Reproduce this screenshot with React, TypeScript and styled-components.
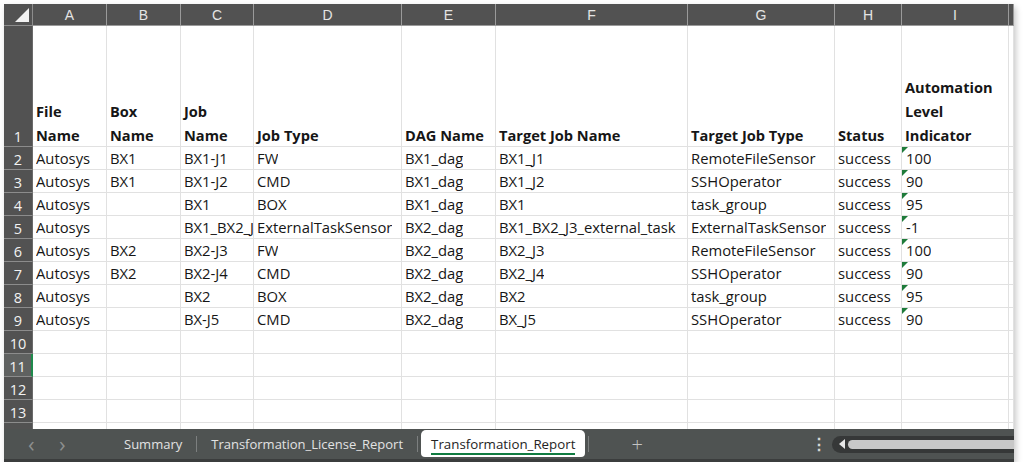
import React from "react";
import styled, { createGlobalStyle } from "styled-components";

const GlobalStyle = createGlobalStyle`
  html, body {
    margin: 0;
    padding: 0;
    background: #ffffff;
  }
`;

const COLS = ["A", "B", "C", "D", "E", "F", "G", "H", "I"];

const HEADERS = [
  "File\nName",
  "Box\nName",
  "Job\nName",
  "Job Type",
  "DAG Name",
  "Target Job Name",
  "Target Job Type",
  "Status",
  "Automation\nLevel\nIndicator",
];

const ROWS = [
  ["Autosys", "BX1", "BX1-J1", "FW", "BX1_dag", "BX1_J1", "RemoteFileSensor", "success", "100"],
  ["Autosys", "BX1", "BX1-J2", "CMD", "BX1_dag", "BX1_J2", "SSHOperator", "success", "90"],
  ["Autosys", "", "BX1", "BOX", "BX1_dag", "BX1", "task_group", "success", "95"],
  ["Autosys", "", "BX1_BX2_J3_external_task", "ExternalTaskSensor", "BX2_dag", "BX1_BX2_J3_external_task", "ExternalTaskSensor", "success", "-1"],
  ["Autosys", "BX2", "BX2-J3", "FW", "BX2_dag", "BX2_J3", "RemoteFileSensor", "success", "100"],
  ["Autosys", "BX2", "BX2-J4", "CMD", "BX2_dag", "BX2_J4", "SSHOperator", "success", "90"],
  ["Autosys", "", "BX2", "BOX", "BX2_dag", "BX2", "task_group", "success", "95"],
  ["Autosys", "", "BX-J5", "CMD", "BX2_dag", "BX_J5", "SSHOperator", "success", "90"],
];

const EMPTY_ROWS = [10, 11, 12, 13, 14];

function App() {
  return (
    <>
      <GlobalStyle />
      <Frame>
        <Sheet>
          <Corner>
            <svg width="14" height="14" viewBox="0 0 14 14">
              <polygon points="14,0 14,14 0,14" fill="#f2f2f2" />
            </svg>
          </Corner>
          {COLS.map((c) => (
            <ColHead key={c}>{c}</ColHead>
          ))}
          <ColHead />

          <RowHead>1</RowHead>
          {HEADERS.map((h, i) => (
            <HeadCell key={i}>
              <span>{h}</span>
            </HeadCell>
          ))}
          <Cell />

          {ROWS.map((row, r) => (
            <React.Fragment key={r}>
              <RowHead>{r + 2}</RowHead>
              {row.map((v, i) => (
                <Cell key={i} $flag={i === 8}>
                  {i === 8 && <Flag />}
                  <Value>{v}</Value>
                </Cell>
              ))}
              <Cell />
            </React.Fragment>
          ))}

          {EMPTY_ROWS.map((n) => (
            <React.Fragment key={n}>
              <RowHead $active={n === 11}>{n}</RowHead>
              {COLS.map((c) => (
                <Cell key={c} />
              ))}
              <Cell />
            </React.Fragment>
          ))}
        </Sheet>

        <TabBar>
          <NavArrow>‹</NavArrow>
          <NavArrow>›</NavArrow>
          <Tab $first>Summary</Tab>
          <Divider />
          <Tab>Transformation_License_Report</Tab>
          <Divider />
          <ActiveTab>
            <span>Transformation_Report</span>
          </ActiveTab>
          <Divider />
          <AddTab>+</AddTab>
          <More>⋮</More>
          <ScrollTrack>
            <svg width="8" height="10" viewBox="0 0 8 10">
              <polygon points="7,0 7,10 1,5" fill="#e8e8e8" />
            </svg>
            <Thumb />
          </ScrollTrack>
        </TabBar>
      </Frame>
    </>
  );
}

const Frame = styled.div`
  margin: 4px 0 0 4px;
  width: 1010px;
  height: 458px;
  display: flex;
  flex-direction: column;
  overflow: hidden;
  box-shadow: 2px 3px 6px rgba(0, 0, 0, 0.22);
  background: #ffffff;
`;

const Sheet = styled.div`
  display: grid;
  grid-template-columns: 29px 74px 74px 73px 148px 94px 192px 147px 67px 107px 1fr;
  grid-template-rows: 22px 121px repeat(13, 23px);
  height: 425px;
  overflow: hidden;
  flex-shrink: 0;
  font-family: "Open Sans", "Noto Sans", sans-serif;
`;

const Corner = styled.div`
  background: #525252;
  border-right: 1px solid #8c8c8c;
  border-bottom: 1px solid #8c8c8c;
  display: flex;
  align-items: flex-end;
  justify-content: flex-end;
  padding: 0 3px 3px 0;
  box-sizing: border-box;
`;

const ColHead = styled.div`
  background: #525252;
  color: #e4e4e4;
  font-family: "Liberation Sans", Arial, sans-serif;
  font-size: 14px;
  display: flex;
  align-items: center;
  justify-content: center;
  border-right: 1px solid #9a9a9a;
  border-bottom: 1px solid #9a9a9a;
  box-sizing: border-box;
`;

const RowHead = styled.div<{ $active?: boolean }>`
  background: ${(p) => (p.$active ? "#5f6160" : "#525252")};
  color: #f2f2f2;
  font-size: 14.5px;
  display: flex;
  align-items: flex-end;
  justify-content: center;
  padding-bottom: 0;
  border-bottom: 1px solid #8c8c8c;
  border-right: ${(p) => (p.$active ? "2px solid #1f8a4c" : "1px solid #6a6a6a")};
  box-sizing: border-box;
`;

const Cell = styled.div<{ $flag?: boolean }>`
  position: relative;
  border-right: 1px solid #e1e1e1;
  border-bottom: 1px solid #e1e1e1;
  box-sizing: border-box;
  padding: 0 0 1px ${(p) => (p.$flag ? "4px" : "3px")};
  display: flex;
  align-items: flex-end;
  white-space: nowrap;
  overflow: hidden;
  font-size: 14.8px;
  color: #161616;
`;

const Value = styled.span`
  display: block;
  max-width: 100%;
  overflow: hidden;
  text-overflow: clip;
`;

const HeadCell = styled(Cell)`
  white-space: pre-line;
  font-weight: 700;
  font-size: 14.6px;
  line-height: 24px;
  padding-bottom: 0;

  span {
    margin-bottom: -1px;
  }
`;

const Flag = styled.span`
  position: absolute;
  top: 0;
  left: 0;
  width: 0;
  height: 0;
  border-top: 6px solid #1e7b3a;
  border-right: 6px solid transparent;
`;

const TabBar = styled.div`
  flex: 1;
  display: flex;
  align-items: center;
  background: #4f5352;
  border-bottom: 3px solid #3b3d3d;
  font-family: "Open Sans", "Noto Sans", sans-serif;
  font-size: 13px;
  color: #e2e2e2;
  padding-left: 24px;
  box-sizing: border-box;
`;

const NavArrow = styled.span`
  width: 31px;
  color: #8d8f8f;
  font-size: 22px;
  line-height: 1;
  margin-top: -3px;
`;

const Tab = styled.span<{ $first?: boolean }>`
  padding: 0 14px;
  margin-left: ${(p) => (p.$first ? "20px" : "0")};
`;

const Divider = styled.span`
  width: 1px;
  height: 16px;
  background: #7c7f7f;
`;

const ActiveTab = styled.div`
  align-self: flex-start;
  margin: 1px 3px 0;
  height: 27px;
  background: #ffffff;
  border-radius: 5px 5px 4px 4px;
  padding: 0 10px;
  display: flex;
  align-items: center;
  color: #242424;

  span {
    border-bottom: 2px solid #107c41;
    line-height: 18px;
    margin-top: 3px;
    font-size: 13.3px;
  }
`;

const AddTab = styled.span`
  margin-left: 42px;
  font-size: 20px;
  color: #c4c4c4;
  font-weight: 300;
`;

const More = styled.span`
  margin-left: 168px;
  font-size: 16px;
  color: #d6d6d6;
  font-weight: 700;
`;

const ScrollTrack = styled.div`
  margin-left: 5px;
  flex: 1;
  height: 17px;
  border-radius: 9px 0 0 9px;
  background: #363838;
  display: flex;
  align-items: center;
  padding-left: 6px;
  gap: 2px;
`;

const Thumb = styled.div`
  flex: 1;
  height: 9px;
  border-radius: 5px 0 0 5px;
  background: #c8c8c8;
`;

export default App;
